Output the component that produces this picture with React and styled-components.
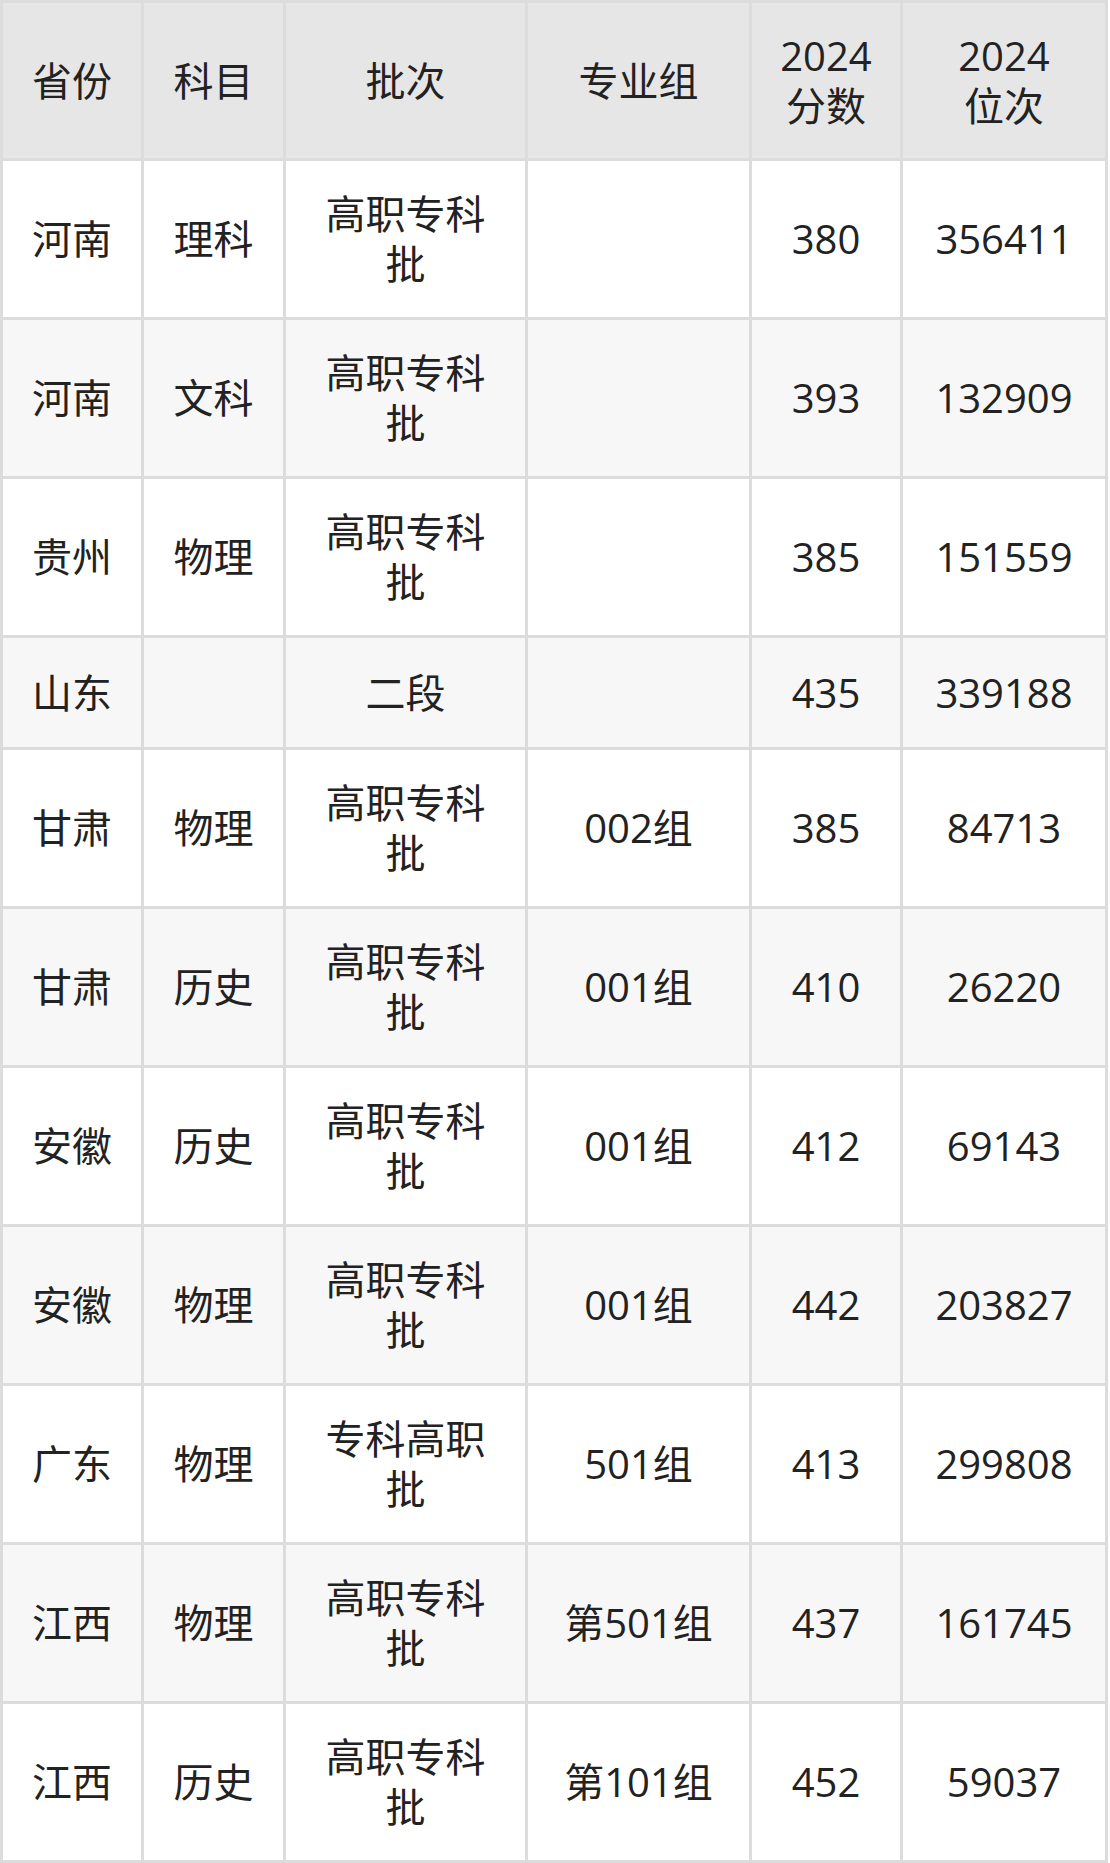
import React from "react";
import styled, { createGlobalStyle } from "styled-components";

const rows = [
  { province: "河南", subject: "理科", batch: "高职专科批", group: "", score: "380", rank: "356411" },
  { province: "河南", subject: "文科", batch: "高职专科批", group: "", score: "393", rank: "132909" },
  { province: "贵州", subject: "物理", batch: "高职专科批", group: "", score: "385", rank: "151559" },
  { province: "山东", subject: "", batch: "二段", group: "", score: "435", rank: "339188", short: true },
  { province: "甘肃", subject: "物理", batch: "高职专科批", group: "002组", score: "385", rank: "84713" },
  { province: "甘肃", subject: "历史", batch: "高职专科批", group: "001组", score: "410", rank: "26220" },
  { province: "安徽", subject: "历史", batch: "高职专科批", group: "001组", score: "412", rank: "69143" },
  { province: "安徽", subject: "物理", batch: "高职专科批", group: "001组", score: "442", rank: "203827" },
  { province: "广东", subject: "物理", batch: "专科高职批", group: "501组", score: "413", rank: "299808" },
  { province: "江西", subject: "物理", batch: "高职专科批", group: "第501组", score: "437", rank: "161745" },
  { province: "江西", subject: "历史", batch: "高职专科批", group: "第101组", score: "452", rank: "59037" },
];

const columns = [141, 142, 242, 224, 151, 205];

export default function App() {
  return (
    <>
      <GlobalStyle />
      <Table>
        <colgroup>
          {columns.map((w, i) => (
            <col key={i} style={{ width: w }} />
          ))}
        </colgroup>
        <thead>
          <tr>
            <Th>省份</Th>
            <Th>科目</Th>
            <Th>批次</Th>
            <Th>专业组</Th>
            <Th>
              2024
              <br />
              分数
            </Th>
            <Th>
              2024
              <br />
              位次
            </Th>
          </tr>
        </thead>
        <tbody>
          {rows.map((r, i) => (
            <Row key={i} $striped={i % 2 === 1} $short={r.short}>
              <Td>{r.province}</Td>
              <Td>{r.subject}</Td>
              <Td>{r.batch}</Td>
              <Td>{r.group}</Td>
              <Td>{r.score}</Td>
              <Td>{r.rank}</Td>
            </Row>
          ))}
        </tbody>
      </Table>
    </>
  );
}

// ---------------- Styled Components ----------------
const GlobalStyle = createGlobalStyle`
  body {
    margin: 0;
    background: #ffffff;
    font-family: "Open Sans", "Noto Sans CJK SC", sans-serif;
    color: #222222;
  }
`;

const Table = styled.table`
  width: 1108px;
  table-layout: fixed;
  border-collapse: collapse;
  border: 3px solid #dcdcdc;
`;

const Th = styled.th`
  height: 155px;
  padding: 0 20px;
  background: #e6e6e6;
  border: 3px solid #dcdcdc;
  font-size: 40px;
  font-weight: 400;
  line-height: 50px;
  text-align: center;
  vertical-align: middle;
`;

const Row = styled.tr`
  background: ${(p) => (p.$striped ? "#f7f7f7" : "#ffffff")};

  td {
    height: ${(p) => (p.$short ? "109px" : "156px")};
  }
`;

const Td = styled.td`
  padding: 0 20px;
  border: 3px solid #dcdcdc;
  font-size: 40px;
  line-height: 50px;
  text-align: center;
  vertical-align: middle;
`;
